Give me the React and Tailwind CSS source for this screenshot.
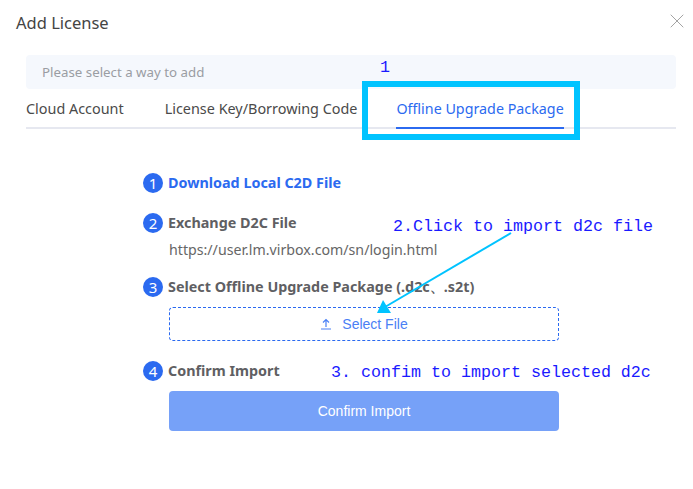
import { X } from 'lucide-react'

const sans = "font-['Noto_Sans','Open_Sans',sans-serif]"
const note = "absolute font-['Liberation_Mono',monospace] text-[16.67px] leading-5 whitespace-pre text-[#1a1aff]"

function StepBadge({ n }) {
  return (
    <span className="flex h-5 w-5 shrink-0 items-center justify-center rounded-full bg-[#2b6af0] text-[15px] leading-none text-white">
      {n}
    </span>
  )
}

function Step({ n, children, blue }) {
  return (
    <div className="flex h-5 items-center gap-[5px]">
      <StepBadge n={n} />
      <span className={`text-[14.35px] font-bold leading-5 ${blue ? 'text-[#2b6af0]' : 'text-[#5f5f63]'}`}>{children}</span>
    </div>
  )
}

export default function App() {
  return (
    <div className={`relative h-[489px] w-[693px] overflow-hidden bg-white ${sans}`}>
      <div className="flex items-start justify-between pl-4 pr-1 pt-[13px]">
        <h1 className="text-[16.5px] font-normal leading-5 text-[#444]">Add License</h1>
        <X className="-mt-1 h-6 w-6 text-[#999]" strokeWidth={0.9} />
      </div>

      <div className="mx-[26px] mt-[22px] mr-[17px]">
        <div className="flex h-[34px] items-center rounded bg-[#f5f8fd] px-4 pt-[2px] text-[13.3px] text-[#9a9da3]">
          Please select a way to add
        </div>
        <div className="flex h-[40px] items-start border-b-2 border-[#e6e8f0] pt-[10px] text-[14.4px] leading-5 text-[#4a4a4a]">
          <span>Cloud Account</span>
          <span className="ml-[41px]">License Key/Borrowing Code</span>
          <span className="relative ml-[39px] h-[30px] text-[14.3px] text-[#2b6af0]">
            Offline Upgrade Package
            <span className="absolute inset-x-0 bottom-0 h-[2px] bg-[#2b6af0]"></span>
          </span>
        </div>
      </div>

      <div className="ml-[143px] mt-[44px] w-[416px]">
        <Step n="1" blue>Download Local C2D File</Step>
        <div className="mt-[20px]">
          <Step n="2">Exchange D2C File</Step>
        </div>
        <p className="ml-[26px] mt-[7px] text-[14.2px] leading-5 text-[#666]">https://user.lm.virbox.com/sn/login.html</p>
        <div className="mt-[17px]">
          <Step n="3">Select Offline Upgrade Package (.d2c、.s2t)</Step>
        </div>
        <div className="ml-[26px] mt-[10px] flex h-[34px] items-center justify-center gap-[10px] rounded-sm border border-dashed border-[#2b6af0] font-['Liberation_Sans',sans-serif] text-[14px] text-[#4a80f5]">
          <svg width="12" height="12" viewBox="0 0 12 12" fill="none" stroke="currentColor" strokeWidth="1.2">
            <path d="M1 11h10M6 9V2M3 4.5 6 1.5l3 3" />
          </svg>
          Select File
        </div>
        <div className="mt-[20px]">
          <Step n="4">Confirm Import</Step>
        </div>
        <button className="ml-[26px] mt-[10px] flex h-10 w-[390px] items-center justify-center rounded bg-[#76a1f8] font-['Liberation_Sans',sans-serif] text-[14px] text-white">
          Confirm Import
        </button>
      </div>

      <div className="absolute left-[362px] top-[81px] h-[59px] w-[218px] border-[6px] border-[#00c3ff]"></div>
      <span className={`${note} left-[380px] top-[58px]`}>1</span>
      <span className={`${note} left-[393px] top-[217px]`}>2.Click to import d2c file</span>
      <span className={`${note} left-[331px] top-[363px]`}>3. confim to import selected d2c</span>

      <svg className="absolute left-0 top-0" width="693" height="489" fill="none">
        <line x1="511" y1="233" x2="385" y2="307" stroke="#00c3ff" strokeWidth="2" />
        <polygon points="377,313 383,300 391,313" fill="#00c3ff" />
      </svg>
    </div>
  )
}
